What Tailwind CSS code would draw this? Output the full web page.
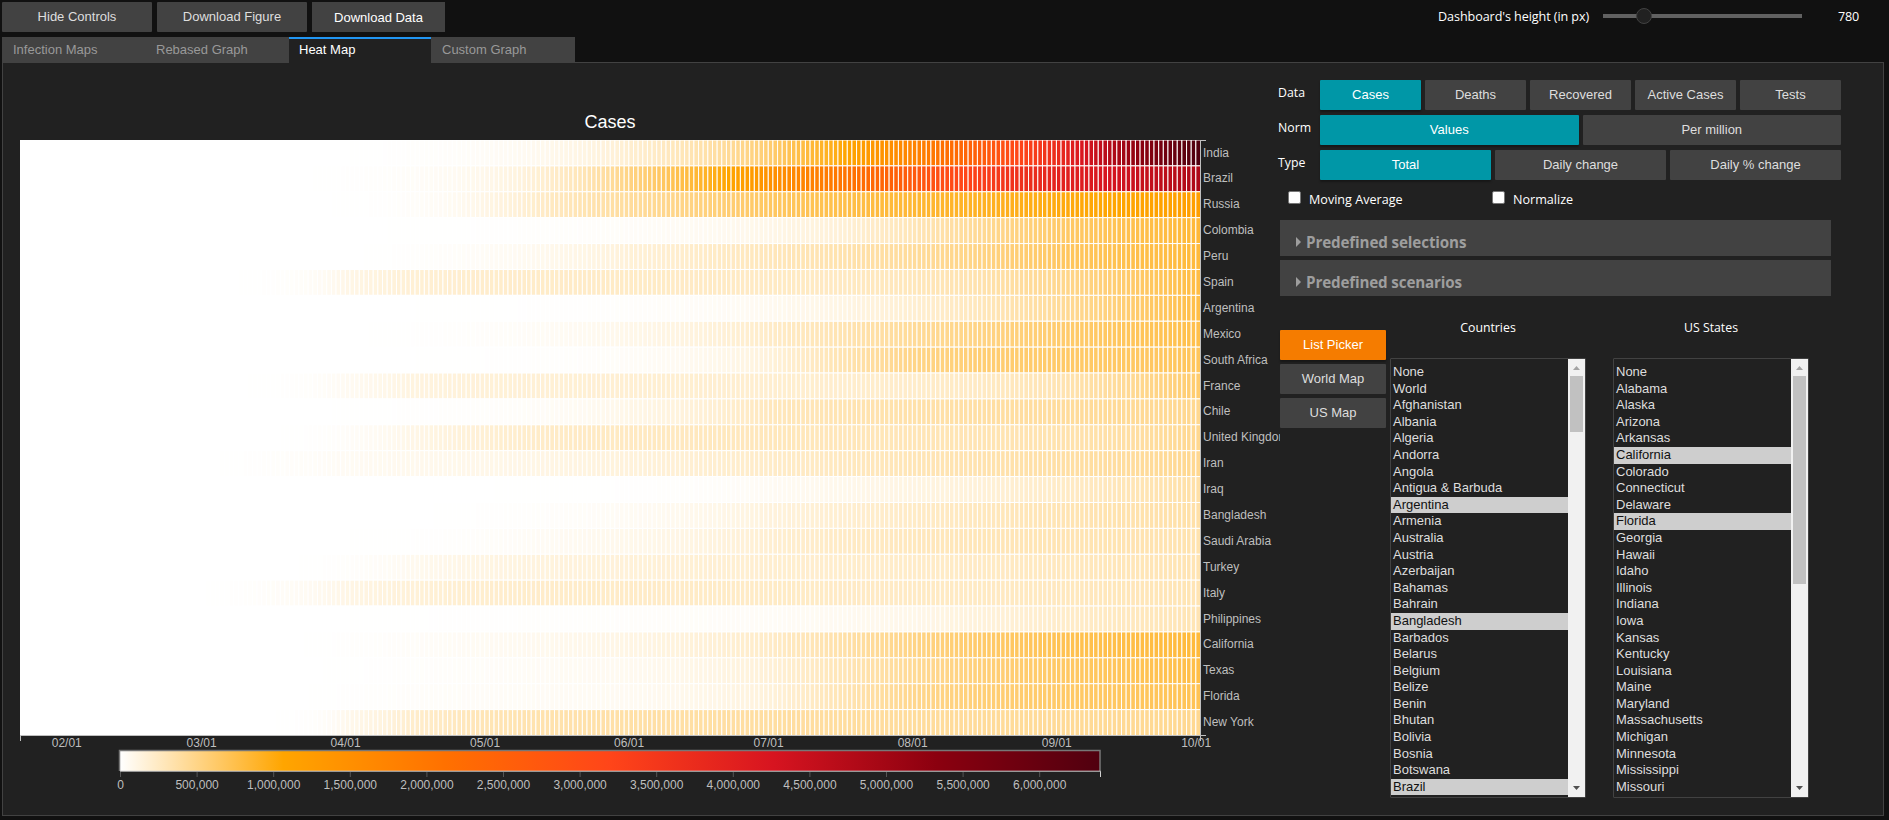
<!DOCTYPE html>
<html lang="en">
<head>
<meta charset="utf-8">
<title>Heat Map Dashboard</title>
<script src="https://cdn.jsdelivr.net/npm/@tailwindcss/browser@4"></script>
</head>
<body class="h-[820px] w-[1889px] overflow-hidden bg-[#111111] font-['Liberation_Sans',Arial,sans-serif] text-[13px] text-white">
<header class="flex h-[37px] items-start pl-[2px] pt-[2px]">
  <button class="h-[30px] w-[150px] rounded-[1px] bg-[#424242] pb-[1px] text-[#dedede]">Hide Controls</button>
  <button class="ml-[5px] h-[30px] w-[150px] rounded-[1px] bg-[#424242] pb-[1px] text-[#dedede]">Download Figure</button>
  <button class="ml-[5px] h-[30px] w-[133px] bg-[#424242] pt-[1px] text-white">Download Data</button>
  <div class="ml-[993px] flex h-[28px] items-center font-['Open_Sans',sans-serif] text-[12.6px]">
    <span class="w-[165px] whitespace-nowrap pt-[2px] tracking-[-0.08px]">Dashboard's height (in px)</span>
    <div class="relative h-[4px] w-[199px] bg-[#616161]"><span class="absolute -top-[6px] left-[33px] size-4 rounded-full border border-[#424242] bg-[#212121]"></span></div>
    <span class="ml-[36px] pt-[2px] tracking-[-0.2px]">780</span>
  </div>
</header>
<nav class="relative z-10 flex h-[25px] pl-[2px] text-[13px] text-[#999999]">
  <div class="h-[26px] w-[143px] bg-[#424242] pl-[11px] leading-[25px]">Infection Maps</div>
  <div class="h-[26px] w-[144px] bg-[#424242] pl-[11px] leading-[25px]">Rebased Graph</div>
  <div class="h-[26px] w-[142px] border-t-2 border-[#2196f3] bg-[#212121] pl-[10px] leading-[21px] text-white">Heat Map</div>
  <div class="h-[26px] w-[144px] bg-[#424242] pl-[11px] leading-[25px]">Custom Graph</div>
</nav>
<main class="ml-[2px] flex h-[754px] w-[1882px] border border-[#424242] bg-[#212121]">
  <svg id="chart" width="1277" height="752" viewBox="3 63 1277 752" class="block shrink-0 overflow-hidden font-['Liberation_Sans',Arial,sans-serif]">
    <defs><linearGradient id="scale"><stop offset="0" stop-color="#ffffff"/><stop offset=".16667" stop-color="#ffa500"/><stop offset=".33333" stop-color="#ff7000"/><stop offset=".5" stop-color="#ff4519"/><stop offset=".66667" stop-color="#d71420"/><stop offset=".83333" stop-color="#8b000f"/><stop offset="1" stop-color="#50000f"/></linearGradient>
    <clipPath id="frame"><rect x="20" y="140" width="1180.5" height="595.5"/></clipPath></defs>
    <text x="610" y="128" text-anchor="middle" font-size="18" fill="#fff">Cases</text>
    <rect x="20" y="140" width="1180.5" height="595.5" fill="#fff"/>
    <g id="cells" clip-path="url(#frame)"></g>
    <path d="M1206 140.5H1200.5V735.5H1206M20.5 741V735.5H1200.5V741" fill="none" stroke="#bfbfbf"/>
    <g id="labels" font-size="12" fill="#bfbfbf"></g>
    <rect x="120" y="751" width="980" height="20" fill="url(#scale)"/>
    <path d="M119.5 771V750.5H1100V771" fill="none" stroke="#777" stroke-width="1.5"/>
    <path d="M120 771.2H1100.5V777" fill="none" stroke="#d0d0d0"/>
  </svg>
  <section class="w-[600px] pt-[17px]">
    <div class="flex w-[561px] flex-col gap-[5px]">
      <div class="flex h-[30px] gap-1"><span class="-ml-[2px] mr-[2px] w-[36px] shrink-0 pt-[4px] font-['Open_Sans',sans-serif] text-[12.3px]">Data</span>
        <button class="flex-1 rounded-[1px] bg-[#0097a7] pb-[1px] shadow-[0_2px_2px_rgba(0,0,0,.3)]">Cases</button><button class="flex-1 rounded-[1px] bg-[#424242] pb-[1px] text-[#dedede]">Deaths</button><button class="flex-1 rounded-[1px] bg-[#424242] pb-[1px] text-[#dedede]">Recovered</button><button class="flex-1 whitespace-nowrap rounded-[1px] bg-[#424242] pb-[1px] text-[#dedede]">Active Cases</button><button class="flex-1 rounded-[1px] bg-[#424242] pb-[1px] text-[#dedede]">Tests</button></div>
      <div class="flex h-[30px] gap-1"><span class="-ml-[2px] mr-[2px] w-[36px] shrink-0 pt-[4px] font-['Open_Sans',sans-serif] text-[12.3px]">Norm</span>
        <button class="flex-1 rounded-[1px] bg-[#0097a7] pb-[1px] shadow-[0_2px_2px_rgba(0,0,0,.3)]">Values</button><button class="flex-1 rounded-[1px] bg-[#424242] pb-[1px] text-[#dedede]">Per million</button></div>
      <div class="flex h-[30px] gap-1"><span class="-ml-[2px] mr-[2px] w-[36px] shrink-0 pt-[4px] font-['Open_Sans',sans-serif] text-[12.3px]">Type</span>
        <button class="flex-1 rounded-[1px] bg-[#0097a7] pb-[1px] shadow-[0_2px_2px_rgba(0,0,0,.3)]">Total</button><button class="flex-1 rounded-[1px] bg-[#424242] pb-[1px] text-[#dedede]">Daily change</button><button class="flex-1 rounded-[1px] bg-[#424242] pb-[1px] text-[#dedede]">Daily % change</button></div>
    </div>
    <div class="flex h-[40px] pl-[8px] pt-[11px] font-['Open_Sans',sans-serif] text-[12.6px]">
      <label class="flex w-[204px]"><span class="mr-[8px] size-[13px] rounded-[2px] border border-[#767676] bg-white"></span>Moving Average</label>
      <label class="flex"><span class="mr-[8px] size-[13px] rounded-[2px] border border-[#767676] bg-white"></span>Normalize</label>
    </div>
    <div class="flex w-[551px] flex-col gap-1 font-['Open_Sans',sans-serif] text-[15.2px] font-bold text-[#9e9e9e]">
      <div class="flex h-[36px] items-center bg-[#424242] pl-[16px] pt-[8px]"><svg width="5" height="10" class="mr-[5px]"><path d="M0 0L5 5L0 10Z" fill="#9e9e9e"/></svg><span class="whitespace-nowrap tracking-[-0.13px]">Predefined selections</span></div>
      <div class="flex h-[36px] items-center bg-[#424242] pl-[16px] pt-[8px]"><svg width="5" height="10" class="mr-[5px]"><path d="M0 0L5 5L0 10Z" fill="#9e9e9e"/></svg><span class="whitespace-nowrap tracking-[-0.15px]">Predefined scenarios</span></div>
    </div>
    <div class="flex pt-[18px]">
      <div class="flex w-[106px] flex-col gap-1 pt-4">
        <button class="h-[30px] rounded-[1px] bg-[#f57c00] pb-[1px] shadow-[0_2px_2px_rgba(0,0,0,.3)]">List Picker</button>
        <button class="h-[30px] rounded-[1px] bg-[#424242] pb-[1px] text-[#dedede]">World Map</button>
        <button class="h-[30px] rounded-[1px] bg-[#424242] pb-[1px] text-[#dedede]">US Map</button>
      </div>
      <div class="ml-1 w-[196px]"><div class="h-[44px] pt-[5px] text-center font-['Open_Sans',sans-serif] text-[12.3px]">Countries</div>
        <div class="flex h-[440px] rounded-[1px] border border-[#424242]"><ul id="countries" class="flex-1 overflow-hidden pt-[5px] text-[#dedede]"></ul>
          <div class="flex w-[17px] flex-col items-center bg-[#f1f1f1] pt-[7px]"><svg width="7" height="4" class="shrink-0"><path d="M0 4L3.5 0L7 4Z" fill="#a3a3a3"/></svg><div class="mt-[6px] h-[56px] w-[13px] bg-[#c1c1c1]"></div><svg width="7" height="4" class="mb-[7px] mt-auto"><path d="M0 0H7L3.5 4Z" fill="#505050"/></svg></div></div></div>
      <div class="ml-[27px] w-[196px]"><div class="h-[44px] pt-[5px] text-center font-['Open_Sans',sans-serif] text-[12.3px]">US States</div>
        <div class="flex h-[440px] rounded-[1px] border border-[#424242]"><ul id="states" class="flex-1 overflow-hidden pt-[5px] text-[#dedede]"></ul>
          <div class="flex w-[17px] flex-col items-center bg-[#f1f1f1] pt-[7px]"><svg width="7" height="4" class="shrink-0"><path d="M0 4L3.5 0L7 4Z" fill="#a3a3a3"/></svg><div class="mt-[6px] h-[208px] w-[13px] bg-[#c1c1c1]"></div><svg width="7" height="4" class="mb-[7px] mt-auto"><path d="M0 0H7L3.5 4Z" fill="#505050"/></svg></div></div></div>
    </div>
  </section>
</main>
<script>
// Cumulative cases in thousands at the given day indices (day 0 = Jan 22).
const days=[0,39,53,70,84,100,114,131,161,175,192,206,223,237,253];
const rows=[
["India",0,0,0,2,12,37,86,199,605,969,1751,2590,3769,5020,6394],
["Brazil",0,0,0,7,29,92,221,527,1453,1970,2708,3317,3951,4382,4847],
["Russia",0,0,0,3,24,114,263,414,661,746,850,917,1001,1073,1185],
["Colombia",0,0,0,1,3,7,14,31,102,165,306,445,624,729,835],
["Peru",0,0,0,1,12,40,84,170,288,337,422,516,658,739,818],
["Spain",0,0,8,104,177,215,230,240,249,257,288,342,470,603,779],
["Argentina",0,0,0,1,2,5,7,18,67,111,197,283,428,577,765],
["Mexico",0,0,0,1,6,21,45,94,232,317,434,512,606,676,748],
["South Africa",0,0,0,1,2,6,13,34,159,311,503,583,629,651,676],
["France",0,0,4,57,133,167,179,189,202,210,225,252,323,434,605],
["Chile",0,0,0,3,8,17,40,105,282,321,358,383,413,439,464],
["United Kingdom",0,0,1,30,104,183,238,257,284,292,305,318,338,376,462],
["Iran",0,1,14,48,76,95,117,154,230,264,306,338,377,407,461],
["Iraq",0,0,0,1,1,2,3,7,51,83,127,168,238,299,367],
["Bangladesh",0,0,0,0,1,8,20,50,149,194,241,275,315,341,364],
["Saudi Arabia",0,0,0,2,6,24,50,87,194,240,278,298,317,326,335],
["Turkey",0,0,0,16,69,122,147,165,201,215,232,248,271,294,320],
["Italy",0,2,25,111,165,207,224,233,241,243,248,253,270,290,317],
["Philippines",0,0,0,2,5,9,12,19,38,59,98,157,224,269,314],
["California",0,0,0,10,27,53,75,115,235,347,510,620,715,768,817],
["Texas",0,0,0,4,15,30,46,66,172,292,444,558,640,695,767],
["Florida",0,0,0,8,22,34,44,57,158,301,480,569,631,668,709],
["New York",0,0,1,84,214,309,345,371,394,404,416,425,435,446,460]];
const stops=[[255,255,255],[255,165,0],[255,112,0],[255,69,25],[215,20,32],[139,0,15],[80,0,15]];
function color(v){const t=Math.min(5.9999,v/6394*6),i=Math.floor(t),f=t-i;return 'rgb('+stops[i].map((c,k)=>Math.round(c+(stops[i+1][k]-c)*f)).join(',')+')';}
function value(r,d){let i=0;while(i<days.length-2&&d>days[i+1])i++;const a=r[i+1],b=r[i+2],f=(d-days[i])/(days[i+1]-days[i]);
  return b>a*2?Math.max(0,Math.pow(a+1,1-f)*Math.pow(b+1,f)-1):a+(b-a)*f;}
let cells='',labels='';const cw=1180.5/254,ch=595.5/23;
rows.forEach((r,j)=>{for(let d=0;d<254;d++)cells+=`<rect x="${(20+d*cw).toFixed(2)}" y="${(140+j*ch).toFixed(2)}" width="${cw.toFixed(3)}" height="${ch.toFixed(3)}" fill="${color(value(r,d))}" stroke="#fff"/>`;
  labels+=`<text x="1203" y="${Math.floor(157+j*ch)}">${r[0]}</text>`;});
[[10,'02/01'],[39,'03/01'],[70,'04/01'],[100,'05/01'],[131,'06/01'],[161,'07/01'],[192,'08/01'],[223,'09/01'],[253,'10/01']].forEach(t=>labels+=`<text x="${20.3+t[0]*cw}" y="747" text-anchor="middle">${t[1]}</text>`);
for(let i=0;i<=12;i++){const x=120.5+i*76.6;labels+=`<path d="M${x} 772V777" stroke="#555"/><text x="${x}" y="789" text-anchor="middle">${(i*500000).toLocaleString('en-US')}</text>`;}
document.getElementById('cells').innerHTML=cells;
document.getElementById('labels').innerHTML=labels;
function fill(id,items,on){document.getElementById(id).innerHTML=items.map(n=>on.includes(n)?`<li class="h-[16.6px] bg-[#cecece] pl-[2px] leading-[16.6px] text-[#111111]">${n}</li>`:`<li class="h-[16.6px] pl-[2px] leading-[16.6px]">${n}</li>`).join('');}
fill('countries',["None","World","Afghanistan","Albania","Algeria","Andorra","Angola","Antigua &amp; Barbuda","Argentina","Armenia","Australia","Austria","Azerbaijan","Bahamas","Bahrain","Bangladesh","Barbados","Belarus","Belgium","Belize","Benin","Bhutan","Bolivia","Bosnia","Botswana","Brazil"],["Argentina","Bangladesh","Brazil"]);
fill('states',["None","Alabama","Alaska","Arizona","Arkansas","California","Colorado","Connecticut","Delaware","Florida","Georgia","Hawaii","Idaho","Illinois","Indiana","Iowa","Kansas","Kentucky","Louisiana","Maine","Maryland","Massachusetts","Michigan","Minnesota","Mississippi","Missouri"],["California","Florida"]);
</script>
</body>
</html>
